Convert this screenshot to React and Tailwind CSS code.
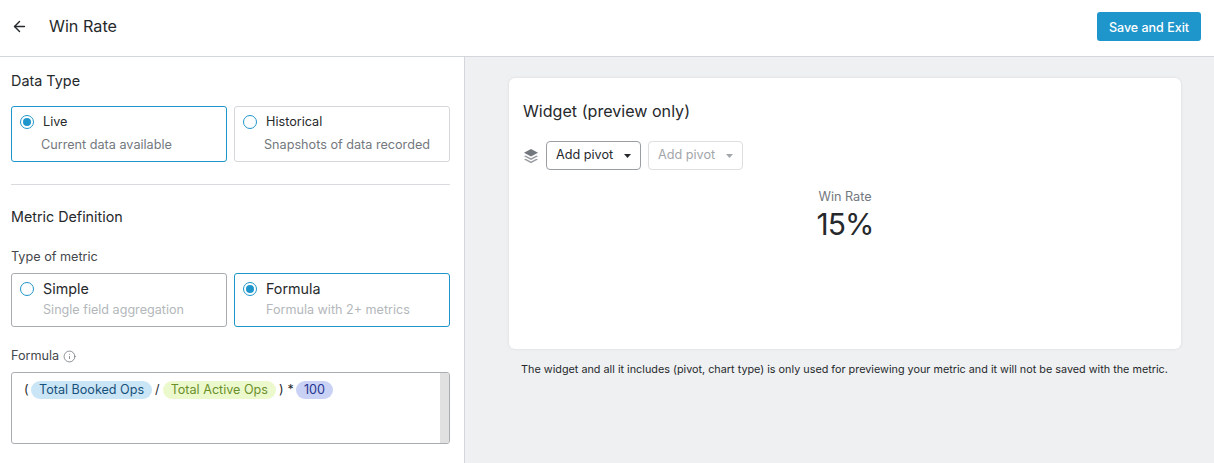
import { ArrowLeft, Info } from 'lucide-react';

function Radio({ checked }) {
  return (
    <span className="w-[14px] h-[14px] rounded-full border border-[#1f96cb] bg-white flex items-center justify-center shrink-0">
      {checked && <span className="w-2 h-2 rounded-full bg-[#1f96cb]" />}
    </span>
  );
}

function OptionCard({ title, desc, checked, muted, descIndent }) {
  return (
    <div className={`flex-1 rounded-[3px] border bg-white ${checked ? 'border-[#1f96cb]' : muted ? 'border-[#a9adb2]' : 'border-[#d5d7da]'}`}>
      {muted ? (
        <div className="pl-2 pt-[6px] h-full">
          <div className="flex items-center gap-[9px]">
            <Radio checked={checked} />
            <span className="text-[14.3px] leading-[17px] text-[#26292c]">{title}</span>
          </div>
          <p className="pl-[23px] mt-[5px] text-[12.6px] leading-[16px] text-[#b3b7bb]">{desc}</p>
        </div>
      ) : (
        <div className="pl-2 pt-[7px] h-full">
          <div className="flex items-center gap-[9px]">
            <Radio checked={checked} />
            <span className="text-[12.65px] leading-[16px] text-[#26292c]">{title}</span>
          </div>
          <p className={`${descIndent} mt-[7px] text-[12.65px] leading-[16px] text-[#73787e]`}>{desc}</p>
        </div>
      )}
    </div>
  );
}

function Pill({ className, children }) {
  return <span className={`h-[18px] rounded-full flex items-center text-[12.6px] ${className}`}>{children}</span>;
}

function PivotButton({ disabled }) {
  return (
    <button className={`w-[95px] h-[29px] rounded-[4px] border bg-white flex items-center pl-[9px] text-[12.65px] ${disabled ? 'border-[#dcdee0] text-[#a3a6aa]' : 'border-[#9a9ea3] text-[#26292c]'}`}>
      Add pivot
      <svg className="ml-[11px]" width="7" height="4" viewBox="0 0 7 4">
        <path d="M0 0h7L3.5 4z" fill={disabled ? '#a3a6aa' : '#26292c'} />
      </svg>
    </button>
  );
}

export default function App() {
  return (
    <div className="w-[1214px] h-[463px] overflow-hidden bg-white font-['Inter',sans-serif] flex flex-col text-[#26292c]">
      {/* Header */}
      <div className="h-[57px] shrink-0 border-b border-[#d3d6da] flex items-center pl-[11px] pr-[13px] pb-[3px]">
        <ArrowLeft size={17} strokeWidth={2} className="text-[#26292c]" />
        <h1 className="ml-[21px] text-[16.2px] leading-5 text-[#26292c] -mt-px">Win Rate</h1>
        <button className="ml-auto w-[104px] h-[29px] rounded-[3px] bg-[#1f96cb] text-white text-[12.5px] font-medium pt-[3px]">Save and Exit</button>
      </div>

      <div className="flex-1 flex min-h-0">
        {/* Left panel */}
        <div className="w-[465px] shrink-0 border-r border-[#d3d6da] pl-[11px] pr-[14px] pt-[15px]">
          <h2 className="text-[14.4px] leading-[17px]">Data Type</h2>
          <div className="flex gap-[7px] mt-[17px] h-[56px]">
            <OptionCard title="Live" desc="Current data available" checked descIndent="pl-[21px]" />
            <OptionCard title="Historical" desc="Snapshots of data recorded" descIndent="pl-[21px]" />
          </div>
          <div className="h-px bg-[#d9dbde] mt-[22px]" />
          <h2 className="text-[14.3px] leading-[17px] mt-[23px]">Metric Definition</h2>
          <p className="text-[12.65px] leading-4 mt-[24px] text-[#44484c]">Type of metric</p>
          <div className="flex gap-[7px] mt-[8px] h-[54px]">
            <OptionCard title="Simple" desc="Single field aggregation" muted />
            <OptionCard title="Formula" desc="Formula with 2+ metrics" checked muted />
          </div>
          <div className="flex items-center gap-[4px] mt-[21px] text-[12.65px] leading-4 text-[#44484c]">
            Formula
            <Info size={13} strokeWidth={1.5} className="text-[#73787e]" />
          </div>
          <div className="relative mt-[8px] h-[72px] rounded-[3px] border border-[#a9adb2] bg-white pl-[12px] pt-[8px] overflow-hidden">
            <div className="flex items-center text-[12.6px] text-[#26292c]">
              <span className="w-[7px]">(</span>
              <Pill className="px-2 bg-[#cae6f6] text-[#17507a]">Total Booked Ops</Pill>
              <span className="mx-[3px]">/</span>
              <Pill className="px-2 bg-[#ecf9cd] text-[#6a8f2a]">Total Active Ops</Pill>
              <span className="ml-[3px]">)</span>
              <span className="ml-[4px] mr-[2px]">*</span>
              <Pill className="px-2 bg-[#c9d1f5] text-[#24348f]">100</Pill>
            </div>
            <div className="absolute right-0 top-0 bottom-0 w-[9px] bg-[#e1e1e1]" />
          </div>
        </div>

        {/* Preview */}
        <div className="flex-1 bg-[#eff0f2] pl-[43px] pr-[33px] pt-[21px]">
          <div className="h-[271px] ml-px rounded-[6px] bg-white shadow-[0_0_3px_rgba(0,0,0,0.1)] pl-[14px] pt-[23px]">
            <h2 className="text-[16.1px] leading-5">Widget (preview only)</h2>
            <div className="flex items-center mt-[20px]">
              <svg width="16" height="16" viewBox="0 0 16 16" className="mr-[7px]">
                <path d="M8 1l7 3.8-7 3.8-7-3.8z" fill="#73787e" />
                <path d="M2.6 7.4L1 8.3l7 3.8 7-3.8-1.6-.9L8 10.3z" fill="#9a9ea3" />
                <path d="M2.6 10.7L1 11.6l7 3.6 7-3.6-1.6-.9L8 13.5z" fill="#9a9ea3" />
              </svg>
              <PivotButton />
              <span className="w-[7px]" />
              <PivotButton disabled />
            </div>
            <div className="text-center pr-[14px] mt-[19px]">
              <p className="text-[12.65px] leading-4 text-[#73787e]">Win Rate</p>
              <p className="text-[30px] leading-[38px] tracking-[-1px] text-[#26292c]">15%</p>
            </div>
          </div>
          <p className="mt-[14px] text-center text-[10.82px] leading-[14px] text-[#26292c]">
            The widget and all it includes (pivot, chart type) is only used for previewing your metric and it will not be saved with the metric.
          </p>
        </div>
      </div>
    </div>
  );
}
